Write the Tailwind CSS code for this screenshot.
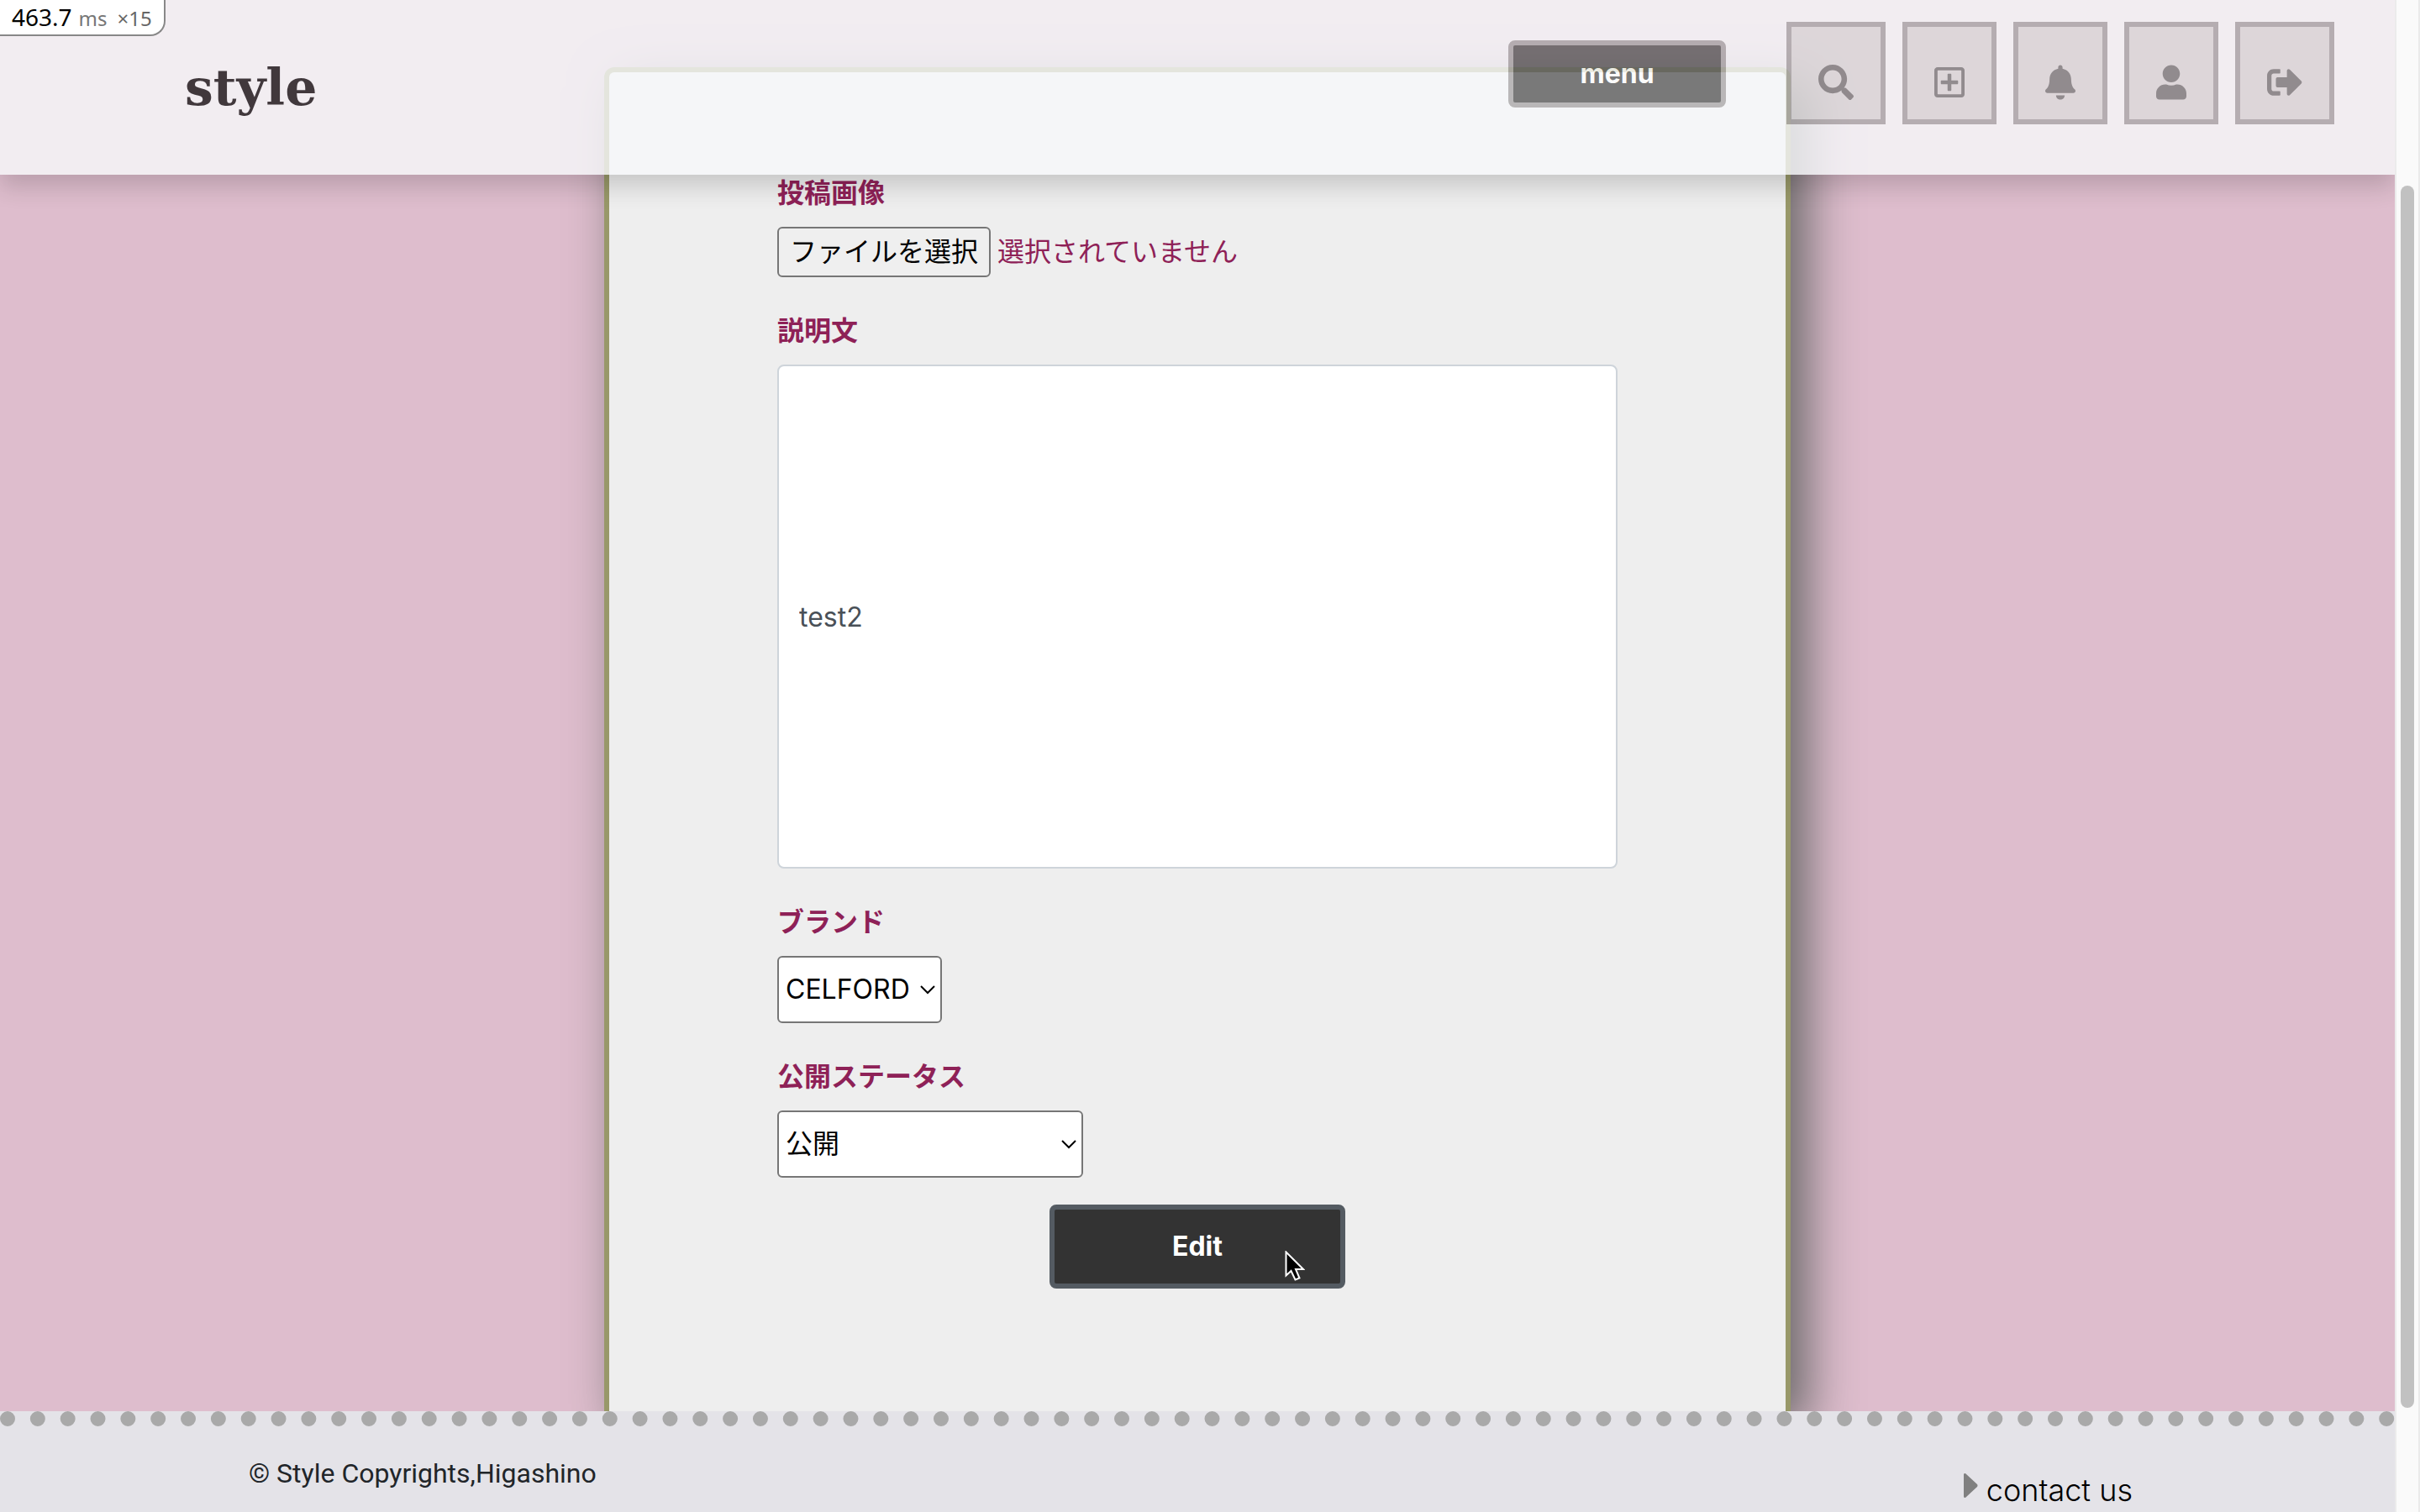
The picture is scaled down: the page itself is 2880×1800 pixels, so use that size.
<!DOCTYPE html>
<html lang="ja">
<head>
<meta charset="utf-8">
<meta name="viewport" content="width=device-width, initial-scale=1">
<title>style</title>
<script src="https://cdn.jsdelivr.net/npm/@tailwindcss/browser@4"></script>
</head>
<body class="h-screen overflow-hidden flex bg-[#debdcd] font-[Inter,'Noto_Sans_CJK_JP',sans-serif] text-[32px] leading-[48px] text-[#212529]">

<div class="relative flex-1 min-w-0 flex flex-col overflow-hidden">

  <!-- Site header, translucent over the page -->
  <header class="absolute inset-x-0 top-0 z-20 h-[208px] flex items-start justify-between pl-[220px] pr-[72px] bg-[#f7f9fb] opacity-80 shadow-[0_14px_26px_rgba(0,0,0,0.2)]">
    <a href="#" class="pt-[62px] font-['DejaVu_Serif',serif] font-bold text-[60px] leading-[84px] text-[#1a1819]">style</a>
    <div class="flex items-start pt-[26px]">
      <button type="button" class="mt-[22px] mr-[72px] w-[259px] h-20 rounded-lg border-6 border-[#acaaab] bg-[#5d5d5d] text-white font-bold">menu</button>
      <nav class="flex gap-5 text-[#7f7f7f]">
        <a href="#" aria-label="search" class="h-[122px] px-8 pt-[45px] border-6 border-[#acaaab] bg-[#ddd]"><svg class="w-[42px] h-[42px]" viewBox="0 0 512 512" fill="currentColor"><path d="M505 442.700L405.300 343c-4.500-4.500-10.600-7-17-7H372c27.600-35.300 44-79.700 44-128C416 93.100 322.900 0 208 0S0 93.100 0 208s93.100 208 208 208c48.300 0 92.700-16.400 128-44v16.300c0 6.400 2.500 12.500 7 17l99.700 99.700c9.400 9.400 24.600 9.400 33.900 0l28.300-28.300c9.400-9.400 9.400-24.600.1-34zM208 336c-70.700 0-128-57.200-128-128 0-70.700 57.200-128 128-128 70.700 0 128 57.200 128 128 0 70.700-57.200 128-128 128z"/></svg></a>
        <a href="#" aria-label="new post" class="h-[122px] px-8 pt-[45px] border-6 border-[#acaaab] bg-[#ddd]"><svg class="w-9 h-[42px]" viewBox="0 0 448 512" fill="currentColor"><path d="M352 240v32c0 6.600-5.400 12-12 12h-88v88c0 6.600-5.400 12-12 12h-32c-6.600 0-12-5.400-12-12v-88h-88c-6.600 0-12-5.400-12-12v-32c0-6.600 5.400-12 12-12h88v-88c0-6.600 5.400-12 12-12h32c6.600 0 12 5.400 12 12v88h88c6.600 0 12 5.400 12 12zm96-160v352c0 26.500-21.500 48-48 48H48c-26.500 0-48-21.500-48-48V80c0-26.500 21.500-48 48-48h352c26.500 0 48 21.500 48 48zm-48 346V86c0-3.300-2.700-6-6-6H54c-3.300 0-6 2.700-6 6v340c0 3.300 2.700 6 6 6h340c3.300 0 6-2.700 6-6z"/></svg></a>
        <a href="#" aria-label="notifications" class="h-[122px] px-8 pt-[45px] border-6 border-[#acaaab] bg-[#ddd]"><svg class="w-9 h-[42px]" viewBox="0 0 448 512" fill="currentColor"><path d="M224 512c35.320 0 63.970-28.650 63.970-64H160.030c0 35.350 28.650 64 63.970 64zm215.390-149.710c-19.320-20.760-55.470-51.990-55.470-154.290 0-77.700-54.480-139.900-127.940-155.160V32c0-17.670-14.320-32-31.980-32s-31.980 14.330-31.980 32v20.840C118.560 68.100 64.080 130.300 64.080 208c0 102.300-36.150 133.530-55.470 154.290-6 6.450-8.660 14.160-8.610 21.710.11 16.400 12.980 32 32.100 32h383.800c19.120 0 32-15.600 32.100-32 .05-7.550-2.610-15.270-8.610-21.710z"/></svg></a>
        <a href="#" aria-label="profile" class="h-[122px] px-8 pt-[45px] border-6 border-[#acaaab] bg-[#ddd]"><svg class="w-9 h-[42px]" viewBox="0 0 448 512" fill="currentColor"><path d="M224 256c70.700 0 128-57.300 128-128S294.700 0 224 0 96 57.300 96 128s57.300 128 128 128zm89.600 32h-16.700c-22.200 10.200-46.900 16-72.900 16s-50.600-5.800-72.900-16h-16.700C60.200 288 0 348.200 0 422.400V464c0 26.500 21.500 48 48 48h352c26.500 0 48-21.500 48-48v-41.600c0-74.200-60.200-134.400-134.400-134.400z"/></svg></a>
        <a href="#" aria-label="log out" class="h-[122px] px-8 pt-[45px] border-6 border-[#acaaab] bg-[#ddd]"><svg class="w-[42px] h-[42px]" viewBox="0 0 512 512" fill="currentColor"><path d="M497 273L329 441c-15 15-41 4.500-41-17v-96H152c-13.300 0-24-10.700-24-24v-96c0-13.300 10.700-24 24-24h136V88c0-21.400 25.900-32 41-17l168 168c9.300 9.400 9.300 24.600 0 34zM192 436v-40c0-6.600-5.400-12-12-12H96c-17.700 0-32-14.300-32-32V160c0-17.700 14.300-32 32-32h84c6.600 0 12-5.400 12-12V76c0-6.600-5.400-12-12-12H96c-53 0-96 43-96 96v192c0 53 43 96 96 96h84c6.600 0 12-5.400 12-12z"/></svg></a>
      </nav>
    </div>
  </header>

  <!-- Request timing badge -->
  <div class="absolute left-0 top-0 z-30 h-[43px] flex items-baseline px-3.5 border-r-2 border-b-2 border-[#888] rounded-br-[18px] bg-white font-['Noto_Sans',sans-serif] text-[28px] leading-10 text-black">
    <span>463.7</span><span class="ml-2 text-2xl leading-10 text-[#777]">ms</span><span class="ml-3 text-2xl leading-10 text-[#666]">×15</span>
  </div>

  <main class="flex-1 min-h-0 pt-20">
    <section class="mx-auto h-full max-w-[1412px] px-[200px] pt-[120px] border-6 border-b-0 border-[#989869] rounded-t-xl bg-[#eee] shadow-[20px_20px_60px_#666] text-[#8e2157]">
      <form class="flex flex-col" onsubmit="return false">
        <label for="image" class="font-bold">投稿画像</label>
        <div class="mt-4 flex items-center gap-2">
          <input id="image" type="file" class="sr-only">
          <button type="button" class="h-[60px] w-[254px] rounded-md border-2 border-[#767676] bg-[#efefef] text-black">ファイルを選択</button>
          <span>選択されていません</span>
        </div>

        <label for="caption" class="mt-10 font-bold">説明文</label>
        <input id="caption" type="text" value="test2" class="mt-4 h-[600px] w-full px-6 rounded-lg border-2 border-[#ced4da] bg-white text-[#495057]">

        <label for="brand" class="mt-10 font-bold">ブランド</label>
        <div class="relative mt-4 w-[196px]">
          <select id="brand" class="appearance-none block w-full h-20 pl-2 rounded-md border-2 border-[#767676] bg-white text-black"><option>CELFORD</option></select>
          <svg class="absolute right-2 top-[35px] w-[18px] h-[11px] pointer-events-none" viewBox="0 0 18 11" fill="none" stroke="#000" stroke-width="2"><path d="M1 1l8 8 8-8"/></svg>
        </div>

        <label for="status" class="mt-10 font-bold">公開ステータス</label>
        <div class="relative mt-4 w-[364px]">
          <select id="status" class="appearance-none block w-full h-20 pl-2 rounded-md border-2 border-[#767676] bg-white text-black"><option>公開</option></select>
          <svg class="absolute right-2 top-[35px] w-[18px] h-[11px] pointer-events-none" viewBox="0 0 18 11" fill="none" stroke="#000" stroke-width="2"><path d="M1 1l8 8 8-8"/></svg>
        </div>

        <div class="relative mt-8 w-[352px] self-center">
          <button type="submit" class="block w-full h-[100px] rounded-lg border-6 border-[#545b62] bg-[#333] text-white font-bold">Edit</button>
          <svg class="absolute right-12 top-[55px] w-6 h-9 pointer-events-none" viewBox="0 0 24 36"><path d="M1.500 1.500v28l6-5.500 5 10.500 5-2-4.500-10.500h9z" fill="#000" stroke="#fff" stroke-width="2"/></svg>
        </div>
      </form>
    </section>
  </main>

  <footer class="relative z-10 h-[120px] flex justify-between pl-[296px] pr-[312px] border-t-18 border-dotted border-[#a9a9a9] bg-[#e4e3e8]">
    <p class="pt-8 font-[Roboto,sans-serif]">© Style Copyrights,Higashino</p>
    <a href="#" class="flex items-start gap-2.5 pt-[52px] text-[36px] font-light text-black"><svg class="mt-1 w-[17px] h-[29px]" viewBox="0 0 17 29" fill="#808080"><path d="M0 1.500C0 0 1.500-.5 2.500.5L16 13q1 1.500 0 3L2.500 28.500C1.500 29.500 0 29 0 27.500z"/></svg>contact us</a>
  </footer>
</div>

<!-- Scroll track -->
<div class="w-[30px] flex justify-center border-x-2 border-[#ebebeb] bg-[#fafafa] pt-[221px] pb-[124px]" aria-hidden="true">
  <div class="w-4 h-full rounded-full bg-[#c1c1c1]"></div>
</div>

</body>
</html>
